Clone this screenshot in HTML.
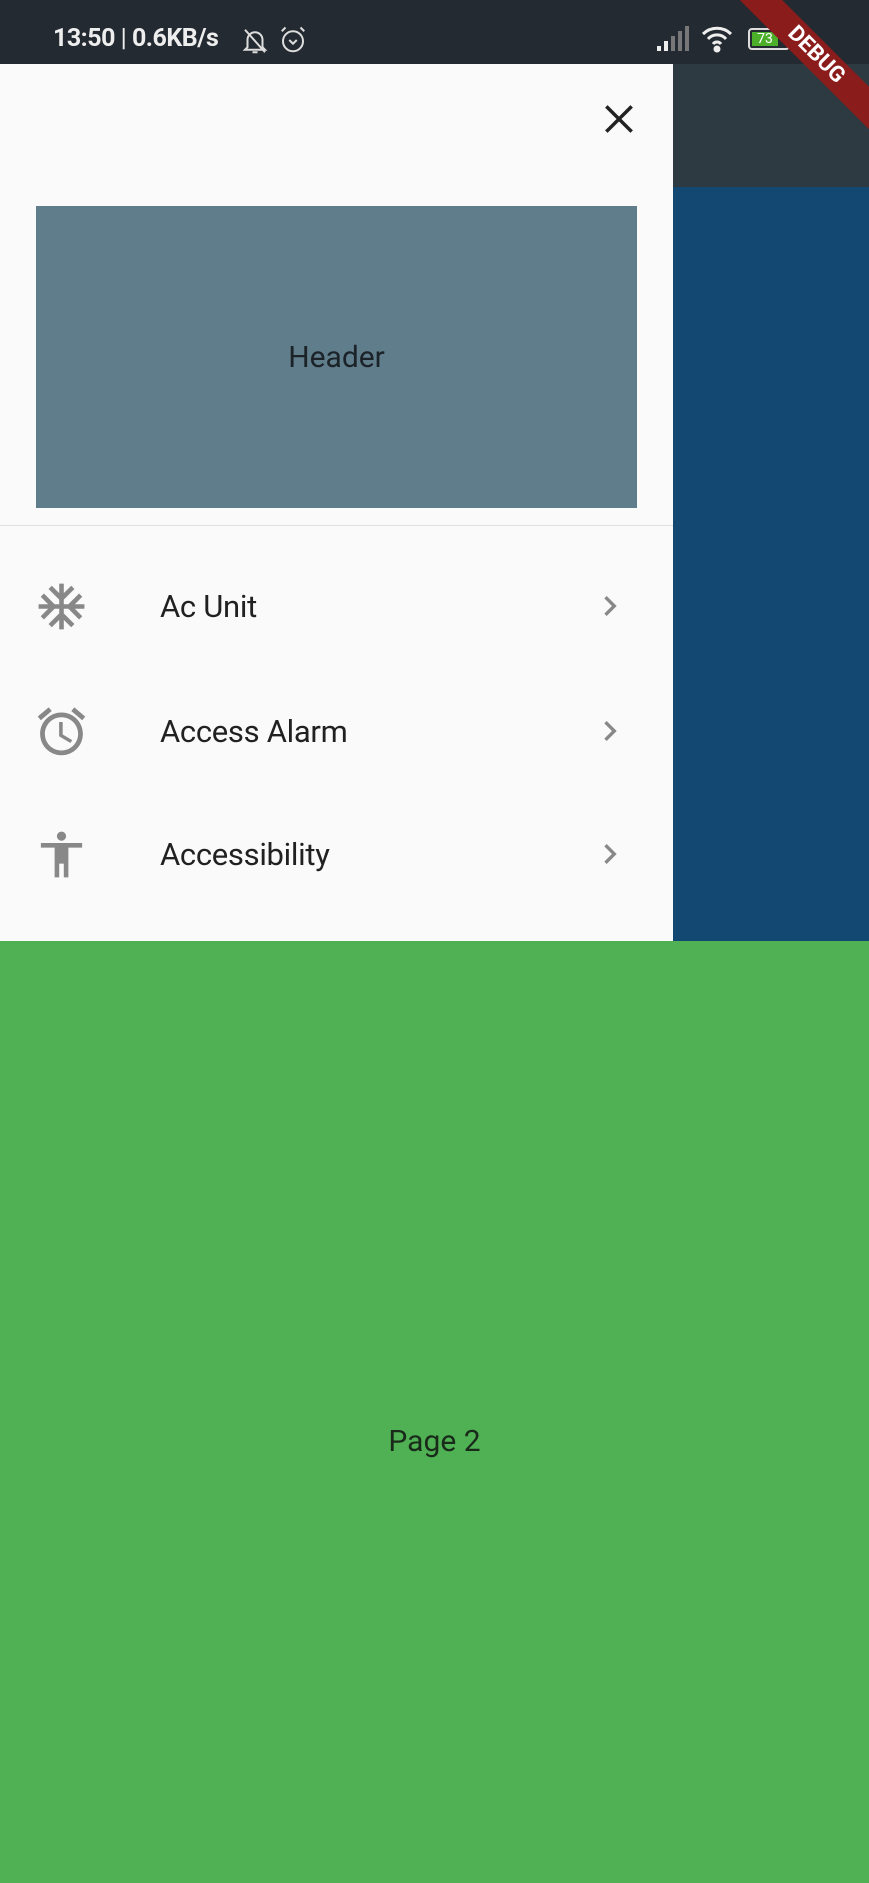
<!DOCTYPE html>
<html><head><meta charset="utf-8"><style>
*{margin:0;padding:0;box-sizing:border-box}
body{width:869px;height:1883px;position:relative;overflow:hidden;font-family:"Roboto","Liberation Sans",sans-serif;background:#4caf50}
.abs{position:absolute}
.status{left:0;top:0;width:869px;height:64px;background:#232a31;color:#eee}
.appbar{left:673px;top:64px;width:196px;height:123px;background:#2e3a42}
.blue{left:673px;top:187px;width:196px;height:754px;background:#134872}
.drawer{left:0;top:64px;width:673px;height:877px;background:#fafafa}
.green{left:0;top:941px;width:869px;height:942px;background:#4fb153}
.item{left:0;width:673px;height:60px;display:flex;align-items:center}
.item span{position:absolute;left:160px;font-size:31px;color:#212121;letter-spacing:-0.3px}
</style></head><body>
<div class="abs status">
  <div class="abs" style="left:53px;top:24px;font-size:25px;font-weight:bold;letter-spacing:-0.5px">13:50 <span style="font-weight:normal">|</span> 0.6KB/s</div>
  <svg class="abs" style="left:240px;top:26px" width="30" height="30" viewBox="0 0 24 24" fill="none" stroke="#ddd" stroke-width="1.6"><path d="M6 17V11a6 6 0 0 1 12 0v6l2 2H4z M10 21h4 M4 3l16 18"/></svg>
  <svg class="abs" style="left:278px;top:25px" width="30" height="30" viewBox="0 0 24 24" fill="none" stroke="#ddd" stroke-width="1.6"><circle cx="12" cy="13" r="8"/><path d="M9 12l3 3 3-3 M3 5l3-3 M21 5l-3-3"/></svg>
  <svg class="abs" style="left:655px;top:26px" width="34" height="26" viewBox="0 0 34 26"><rect x="2" y="20" width="4" height="5" fill="#eee"/><rect x="9" y="15" width="4" height="10" fill="#eee"/><rect x="16" y="10" width="4" height="15" fill="#777"/><rect x="23" y="5" width="4" height="20" fill="#777"/><rect x="30" y="0" width="4" height="25" fill="#777"/></svg>
  <svg class="abs" style="left:700px;top:24px" width="36" height="30" viewBox="0 0 36 30" fill="none" stroke="#eee" stroke-width="3"><path d="M3 10a20 20 0 0 1 28 0 M8 15a12 12 0 0 1 18 0 M13 20a5 5 0 0 1 8 0"/><circle cx="17" cy="25" r="2" fill="#eee"/></svg>
  <div class="abs" style="left:748px;top:28px;width:42px;height:22px;border:2px solid #ddd;border-radius:4px;padding:2px"><div style="width:26px;height:14px;background:#4caf2a;color:#fff;font-size:14px;line-height:14px;text-align:center">73</div></div>
</div>
<div class="abs appbar"></div>
<div class="abs blue"></div>
<div class="abs" style="left:716px;top:40px;width:200px;height:30px;background:#8b1c1c;color:#fff;font-weight:bold;font-size:22px;text-align:center;line-height:30px;transform:rotate(45deg)">DEBUG</div>
<div class="abs drawer">
  <svg class="abs" style="left:600px;top:36px" width="38" height="38" viewBox="0 0 24 24" stroke="#222" stroke-width="2.2"><path d="M4 4l16 16M20 4L4 20"/></svg>
  <div class="abs" style="left:36px;top:142px;width:601px;height:302px;background:#607d8b;display:flex;align-items:center;justify-content:center;font-size:30px;color:#1b2228">Header</div>
  <div class="abs" style="left:0;top:461px;width:673px;height:1px;background:#e0e0e0"></div>
  <div class="abs item" style="top:512px">
    <svg class="abs" style="left:34px" width="55" height="55" viewBox="0 0 24 24" fill="#888"><path d="M22 11h-4.17l3.24-3.24-1.41-1.42L15 11h-2V9l4.66-4.66-1.420-1.41L13 6.17V2h-2v4.17L7.76 2.93 6.34 4.34 11 9v2H9L4.34 6.34 2.93 7.76 6.17 11H2v2h4.17l-3.24 3.24 1.41 1.42L9 13h2v2l-4.66 4.66 1.42 1.41L11 17.83V22h2v-4.17l3.24 3.24 1.42-1.41L13 15v-2h2l4.66 4.66 1.41-1.42L17.830 13H22z"/></svg>
    <span>Ac Unit</span>
    <svg class="abs" style="left:590px" width="40" height="40" viewBox="0 0 24 24" fill="#888"><path d="M10 6L8.59 7.41 13.17 12l-4.58 4.59L10 18l6-6z"/></svg>
  </div>
  <div class="abs item" style="top:637px">
    <svg class="abs" style="left:33px" width="57" height="57" viewBox="0 0 24 24" fill="#888"><path d="M22 5.72l-4.6-3.86-1.29 1.53 4.6 3.86L22 5.72zM7.88 3.39L6.6 1.86 2 5.71l1.29 1.53 4.59-3.85zM12.5 8H11v6l4.75 2.85.75-1.23-4-2.37V8zM12 4c-4.97 0-9 4.03-9 9s4.02 9 9 9c4.97 0 9-4.03 9-9s-4.03-9-9-9zm0 16c-3.87 0-7-3.13-7-7s3.130-7 7-7 7 3.13 7 7-3.13 7-7 7z"/></svg>
    <span>Access Alarm</span>
    <svg class="abs" style="left:590px" width="40" height="40" viewBox="0 0 24 24" fill="#888"><path d="M10 6L8.59 7.41 13.17 12l-4.58 4.59L10 18l6-6z"/></svg>
  </div>
  <div class="abs item" style="top:760px">
    <svg class="abs" style="left:34px" width="55" height="55" viewBox="0 0 24 24" fill="#888"><path d="M12 2c1.1 0 2 .9 2 2s-.9 2-2 2-2-.9-2-2 .9-2 2-2zm9 7h-6v13h-2v-6h-2v6H9V9H3V7h18v2z"/></svg>
    <span>Accessibility</span>
    <svg class="abs" style="left:590px" width="40" height="40" viewBox="0 0 24 24" fill="#888"><path d="M10 6L8.59 7.41 13.17 12l-4.58 4.59L10 18l6-6z"/></svg>
  </div>
</div>
<div class="abs green"><div class="abs" style="left:0;width:869px;top:483px;text-align:center;font-size:30px;color:#1a2a1a">Page 2</div></div>
</body></html>
